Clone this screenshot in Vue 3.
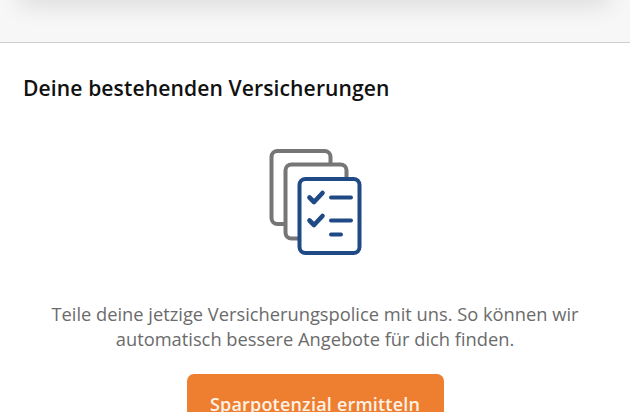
<script setup>
const heading = 'Deine bestehenden Versicherungen'
const text = 'Teile deine jetzige Versicherungspolice mit uns. So können wir automatisch bessere Angebote für dich finden.'
const cta = 'Sparpotenzial ermitteln'
</script>

<template>
  <div class="page">
    <div class="top">
      <div class="card"></div>
    </div>
    <section class="section">
      <h2 class="title">{{ heading }}</h2>
      <svg class="icon" width="100" height="112" viewBox="0 0 100 112" aria-hidden="true">
        <rect x="6.5" y="6" width="59" height="73" rx="6" class="doc-grey" />
        <rect x="20.5" y="19.5" width="61" height="74" rx="6" class="doc-grey" />
        <rect x="34.5" y="34" width="60" height="74" rx="6" class="doc-blue" />
        <path class="line thick" d="M44.5 52.5l4.5 4.5 8.5-9" />
        <path class="line thick" d="M44.5 75.5l4.5 4.5 8.5-9" />
        <path class="line" d="M66 52.5h20M66 75.5h20M66 89.5h10" />
      </svg>
      <p class="text">{{ text }}</p>
      <button class="cta" type="button">{{ cta }}</button>
    </section>
  </div>
</template>

<style>
html, body { margin: 0; background: #fff; }
</style>

<style scoped>
.page {
  width: 630px;
  height: 412px;
  overflow: hidden;
  background: #fff;
  font-family: "Open Sans", sans-serif;
}
.top {
  height: 42px;
  background: #f7f7f7;
  border-bottom: 1px solid #cfcfcf;
  overflow: hidden;
}
.card {
  height: 20px;
  margin: -26px 28px 0;
  background: #e6e6e6;
  box-shadow: 0 4px 24px 8px rgba(0, 0, 0, 0.11);
}
.section {
  display: flex;
  flex-direction: column;
  align-items: center;
  padding: 0 23px;
}
.title {
  align-self: flex-start;
  margin: 31px 0 0;
  font-size: 21.1px;
  line-height: 28px;
  font-weight: 600;
  letter-spacing: 0.1px;
  color: #111;
}
.icon {
  margin-top: 43px;
  display: block;
}
.doc-grey {
  fill: #fff;
  stroke: #767676;
  stroke-width: 4;
}
.doc-blue {
  fill: #fff;
  stroke: #1f4a85;
  stroke-width: 4;
}
.line {
  fill: none;
  stroke: #1f4a85;
  stroke-width: 4;
  stroke-linecap: round;
  stroke-linejoin: round;
}
.thick {
  stroke-width: 4.6;
}
.text {
  margin: 44px 0 0;
  width: 570px;
  text-align: center;
  font-size: 18.3px;
  line-height: 25px;
  color: #6b6b6b;
}
.cta {
  margin-top: 23px;
  flex: none;
  width: 257px;
  height: 60px;
  padding: 0;
  border: 0;
  border-radius: 7px;
  background: #ee7f31;
  color: #fdf2e6;
  font-family: inherit;
  font-size: 18px;
  font-weight: 600;
  letter-spacing: 0.2px;
}
</style>
